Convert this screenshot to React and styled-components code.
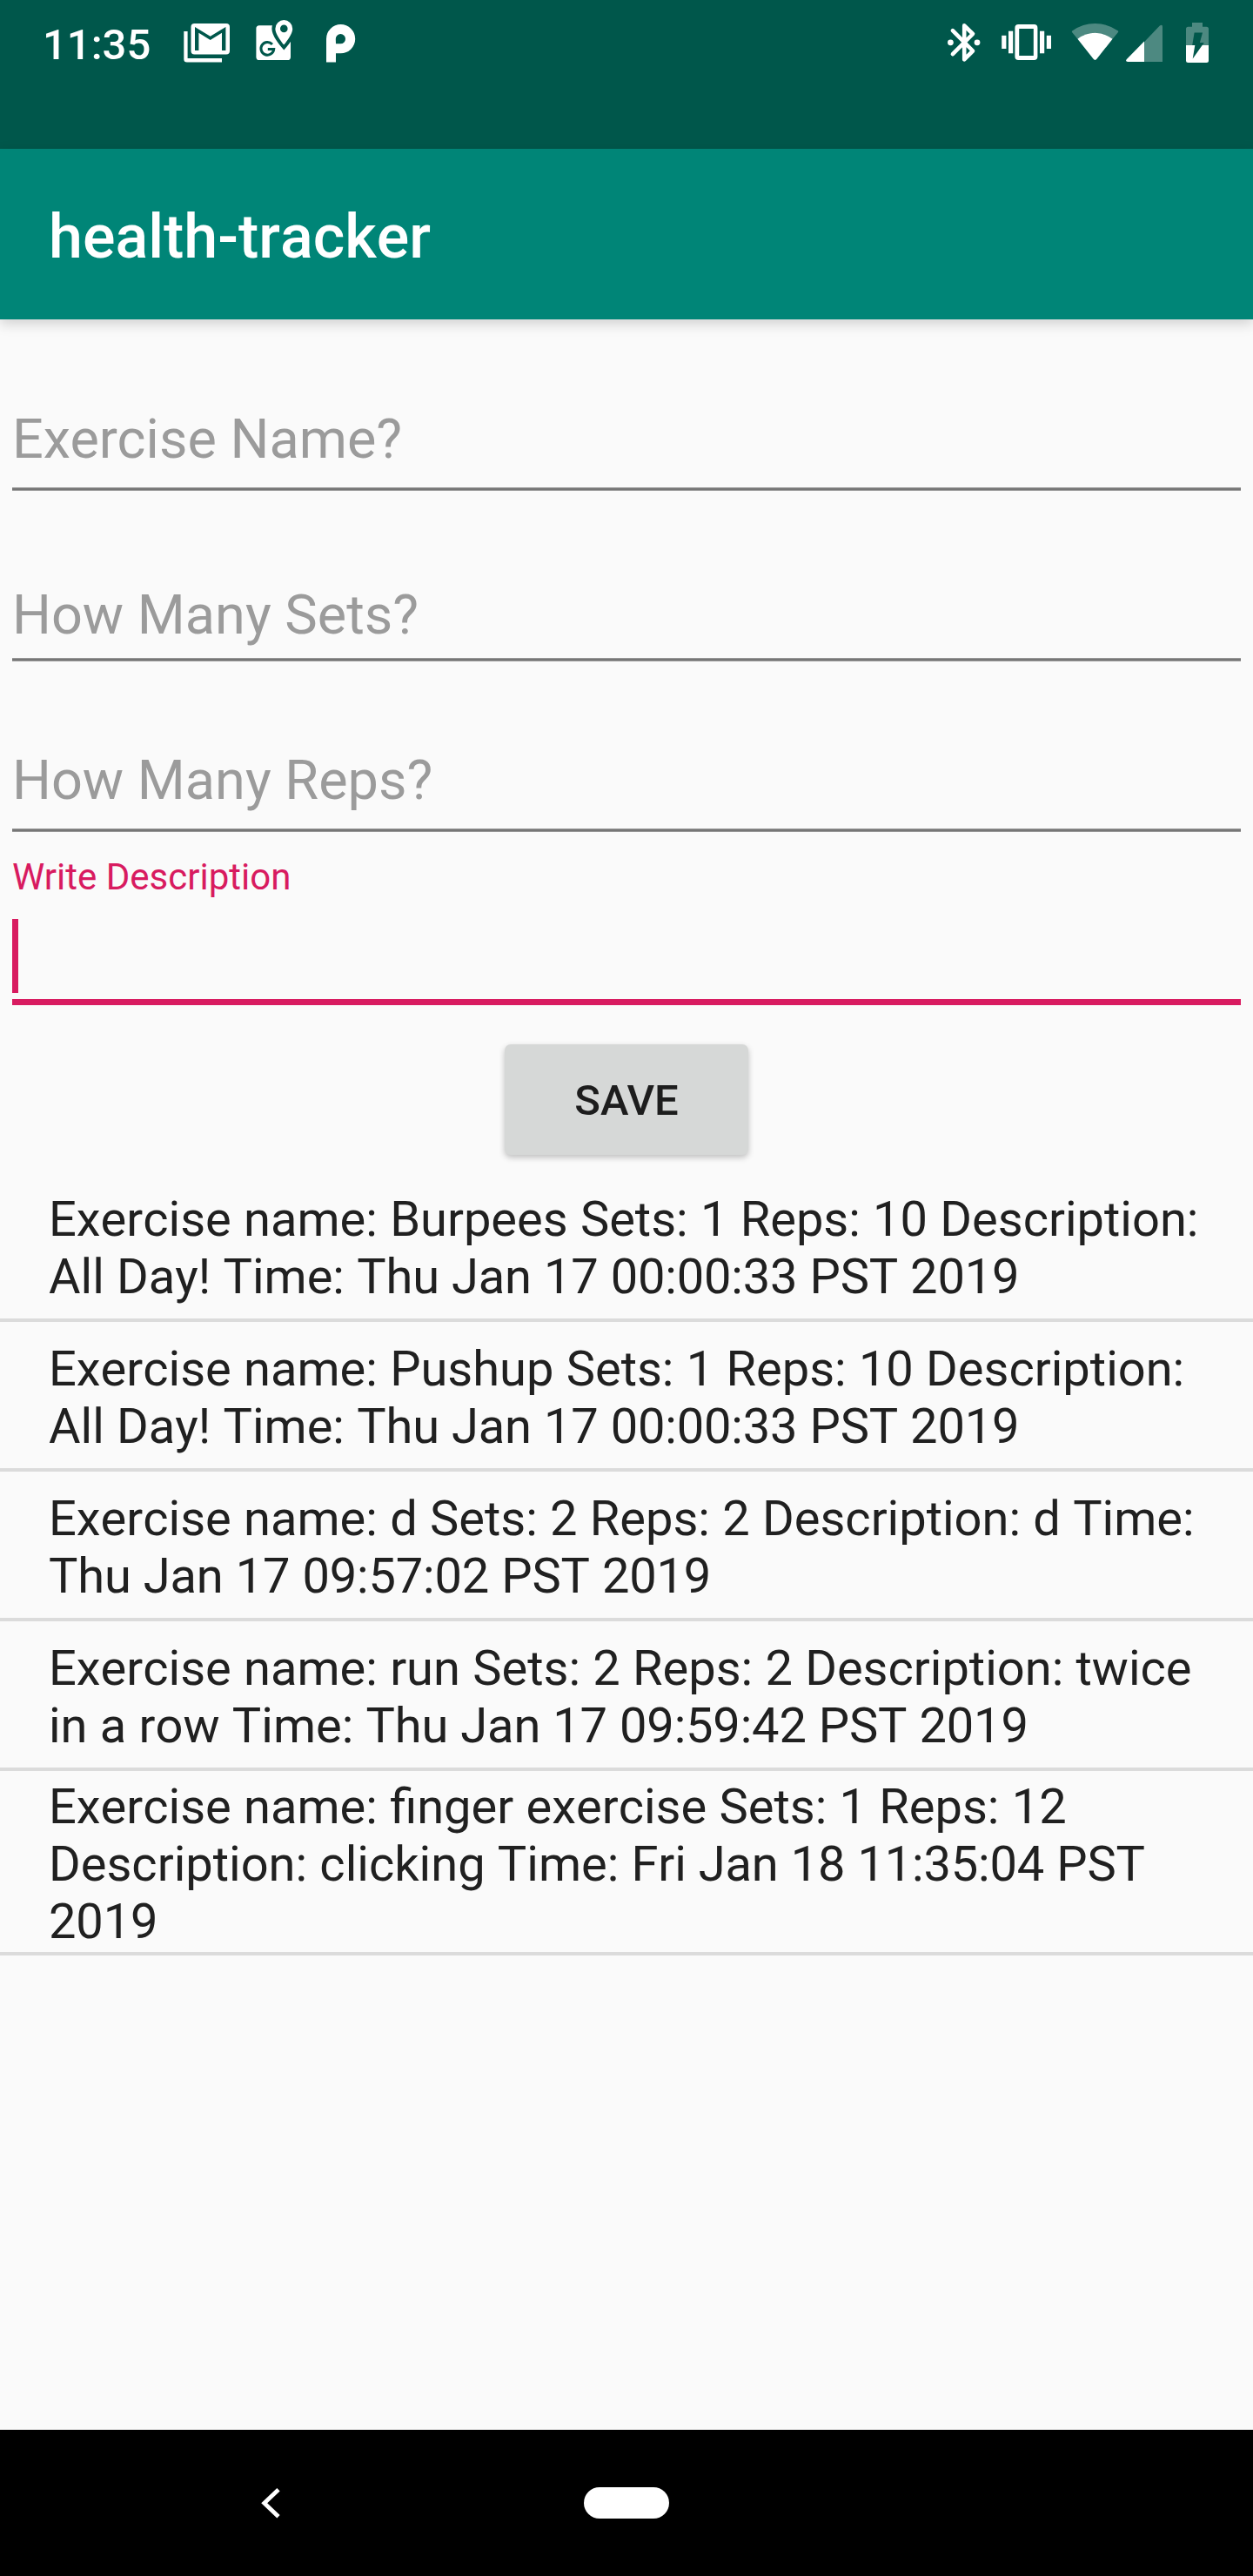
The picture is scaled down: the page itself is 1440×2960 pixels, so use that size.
import React from "react";
import styled, { createGlobalStyle } from "styled-components";

const colors = {
  primary: "#008577",
  primaryDark: "#00574B",
  accent: "#D81B60",
  surface: "#FAFAFA",
  text: "#202020",
  hint: "#9B9B9B",
};

const GlobalStyle = createGlobalStyle`
  *, *::before, *::after { box-sizing: border-box; }
  body {
    margin: 0;
    background: ${colors.surface};
    font-family: Roboto, "Liberation Sans", sans-serif;
  }
`;

const Screen = styled.div`
  display: flex;
  flex-direction: column;
  width: 1440px;
  height: 2960px;
  overflow: hidden;
  background: ${colors.surface};
`;

const StatusBar = styled.header`
  display: flex;
  align-items: flex-start;
  justify-content: space-between;
  flex: none;
  height: 171px;
  padding: 23px 51px 0 49px;
  background: ${colors.primaryDark};
`;

const StatusGroup = styled.div`
  display: flex;
  align-items: flex-start;
`;

const Clock = styled.span`
  width: 162px;
  color: #fff;
  font-size: 49px;
  font-weight: 500;
  line-height: 58px;
  white-space: nowrap;
`;

const StatusIcon = styled.svg`
  display: block;
  flex: none;
  height: 50px;
  margin-left: ${(p) => p.$gap || 0}px;
  fill: #fff;
`;

const AppBar = styled.div`
  position: relative;
  z-index: 1;
  display: flex;
  align-items: center;
  flex: none;
  height: 196px;
  padding: 6px 56px 0;
  background: ${colors.primary};
  box-shadow: 0 5px 14px rgba(0, 0, 0, 0.17);
`;

const Title = styled.h1`
  margin: 0;
  color: #fff;
  font-size: 70px;
  font-weight: 500;
  font-kerning: none;
  line-height: 82px;
`;

const Form = styled.form`
  display: flex;
  flex-direction: column;
  flex: none;
  padding: 0 14px;
`;

const Field = styled.label`
  display: flex;
  flex-direction: column;
  justify-content: flex-end;
  height: ${(p) => p.$height}px;
`;

const Hint = styled.span`
  margin-bottom: ${(p) => p.$gap}px;
  color: ${colors.hint};
  font-size: 63px;
  line-height: 74px;
`;

const Underline = styled.div`
  height: 4px;
  border: solid #979797;
  border-width: 1px 0;
  background: #767676;
`;

const FloatingLabel = styled.span`
  margin-bottom: 24px;
  color: ${colors.accent};
  font-size: 42px;
  line-height: 49px;
`;

const Caret = styled.div`
  width: 7px;
  height: 85px;
  margin-bottom: 7px;
  background: ${colors.accent};
`;

const ActiveUnderline = styled.div`
  height: 7px;
  background: ${colors.accent};
`;

const SaveButton = styled.button`
  align-self: center;
  width: 280px;
  height: 127px;
  margin: 45px 0 20px;
  padding: 2px 0 0;
  border: 0;
  border-radius: 7px;
  background: #d6d8d7;
  box-shadow: 0 3px 7px rgba(0, 0, 0, 0.24);
  color: #1d1d1d;
  font: 500 49px/58px Roboto, "Liberation Sans", sans-serif;
`;

const List = styled.ul`
  flex: 1;
  margin: 0;
  padding: 0;
  list-style: none;
`;

const Row = styled.li`
  display: flex;
  align-items: center;
  min-height: 172px;
  padding: 0 56px;
  border-bottom: 4px solid #dbdbdb;
`;

const RowText = styled.p`
  margin: 0;
  padding: 8px 0 2px;
  color: ${colors.text};
  font-size: 56px;
  font-kerning: none;
  line-height: 66px;
  word-spacing: 0.4px;
`;

const Timestamp = styled.time`
  letter-spacing: -0.16px;
`;

const NavBar = styled.nav`
  display: flex;
  align-items: center;
  flex: none;
  height: 168px;
  padding-left: 300px;
  background: #000;
`;

const BackIcon = styled.svg`
  display: block;
  width: 23px;
  height: 36px;
  margin-right: 348px;
`;

const HomePill = styled.div`
  width: 98px;
  height: 36px;
  border-radius: 18px;
  background: #fff;
`;

const fields = [
  { label: "Exercise Name?", height: 197, gap: 18 },
  { label: "How Many Sets?", height: 196, gap: 12 },
  { label: "How Many Reps?", height: 196, gap: 18 },
];

const exercises = [
  { name: "Burpees", sets: 1, reps: 10, description: "All Day!", time: "Thu Jan 17 00:00:33 PST 2019" },
  { name: "Pushup", sets: 1, reps: 10, description: "All Day!", time: "Thu Jan 17 00:00:33 PST 2019" },
  { name: "d", sets: 2, reps: 2, description: "d", time: "Thu Jan 17 09:57:02 PST 2019" },
  { name: "run", sets: 2, reps: 2, description: "twice in a row", time: "Thu Jan 17 09:59:42 PST 2019" },
  { name: "finger exercise", sets: 1, reps: 12, description: "clicking", time: "Fri Jan 18 11:35:04 PST 2019" },
];

const MailIcon = () => (
  <StatusIcon width="54" viewBox="211 23 54 50">
    <path d="M211.3 36V68q0 3.6 3.6 3.6H255V67H215.6V36Z" />
    <path
      fillRule="evenodd"
      d="M223.5 27H260q4 0 4 4V58.6q0 4-4 4H223.5q-4 0-4-4V31q0-4 4-4ZM224 31V58H228.4V37.7L241.7 46L255 37.7V58H259.4V31L241.7 41.7Z"
    />
  </StatusIcon>
);

const MapsIcon = () => (
  <StatusIcon width="44" $gap={29} viewBox="294 23 44 50">
    <rect x="294.4" y="29.3" width="39.6" height="39.7" rx="3.6" />
    <path
      d="M312.9 50.9A7.4 7.4 0 1 0 314.7 56.6H307.8"
      fill="none"
      stroke={colors.primaryDark}
      strokeWidth="3"
    />
    <path
      d="M326.3 23a9.9 9.9 0 0 0-9.9 9.9c0 7.3 9.9 18.5 9.9 18.5s9.9-11.2 9.9-18.5a9.9 9.9 0 0 0-9.9-9.9Z"
      fill={colors.primaryDark}
      stroke={colors.primaryDark}
      strokeWidth="8"
    />
    <path
      fillRule="evenodd"
      d="M326.3 23a9.9 9.9 0 0 0-9.9 9.9c0 7.3 9.9 18.5 9.9 18.5s9.9-11.2 9.9-18.5a9.9 9.9 0 0 0-9.9-9.9ZM326.3 28.6a4.3 4.3 0 1 1 0 8.6a4.3 4.3 0 1 1 0-8.6Z"
    />
  </StatusIcon>
);

const PandoraIcon = () => (
  <StatusIcon width="34" $gap={37} viewBox="375 23 34 50">
    <path
      fillRule="evenodd"
      d="M375 71.5V44.7a16.6 16.6 0 1 1 16.6 16.6H386V71.5ZM386 50.3H391.4a5.6 5.6 0 1 0-5.6-5.6Z"
    />
  </StatusIcon>
);

const BluetoothIcon = () => (
  <StatusIcon width="38" viewBox="1089 23 38 50">
    <path
      d="M1094.9 35.2L1118 58.5L1108.2 68.3V29.4L1118 39L1094.9 62.2"
      fill="none"
      stroke="#fff"
      strokeWidth="4.6"
      strokeLinecap="round"
      strokeLinejoin="round"
    />
    <circle cx="1092.4" cy="48.8" r="3.4" />
    <circle cx="1123" cy="48.8" r="3.4" />
  </StatusIcon>
);

const VibrateIcon = () => (
  <StatusIcon width="58" $gap={24} viewBox="1151 23 58 50">
    <rect x="1151.2" y="40.8" width="5.2" height="15.2" />
    <rect x="1159" y="35.7" width="5.2" height="25.6" />
    <rect x="1195" y="35.7" width="5.2" height="25.6" />
    <rect x="1202.8" y="40.8" width="5.2" height="15.2" />
    <path
      fillRule="evenodd"
      d="M1170.4 28H1188.4q4 0 4 4V65q0 4-4 4H1170.4q-4 0-4-4V32q0-4 4-4ZM1171.2 33V64H1187.8V33Z"
    />
  </StatusIcon>
);

const WifiIcon = () => (
  <StatusIcon width="55" $gap={22} viewBox="1231 23 55 50">
    <path
      fillOpacity="0.3"
      d="M1238.4 44.7L1232.2 37.2Q1231.3 36 1232.6 35.2Q1244.5 27 1258.5 27T1284.6 35.2Q1285.8 36 1284.8 37.2L1278.6 44.7Q1269.5 37.8 1258.5 37.8T1238.4 44.7Z"
    />
    <path d="M1238.4 44.7Q1247.5 37.8 1258.5 37.8T1278.6 44.7L1260.6 67.6Q1258.5 70.2 1256.4 67.6Z" />
  </StatusIcon>
);

const SignalIcon = () => (
  <StatusIcon width="42" $gap={8} viewBox="1294 23 42 50">
    <path fillOpacity="0.3" d="M1315 48.3L1332.6 29.8Q1336 27 1336 31V71H1315Z" />
    <path d="M1315 47.5V71H1296Q1292.8 70.6 1294.9 68Z" />
  </StatusIcon>
);

const BatteryIcon = () => (
  <StatusIcon width="26" $gap={27} viewBox="1363 23 26 50">
    <path fillOpacity="0.3" d="M1363 52V33.2q0-2.5 2.5-2.5H1370V26H1382V30.7H1386.5q2.5 0 2.5 2.5V52Z" />
    <path d="M1363 52H1389V69.5q0 2.5-2.5 2.5H1365.5q-2.5 0-2.5-2.5Z" />
    <path
      fill={colors.primaryDark}
      d="M1372.6 37.4H1382L1378.9 49H1383.8L1370.7 67.6L1373.3 52H1370.2Z"
    />
  </StatusIcon>
);

export default function App() {
  return (
    <>
      <GlobalStyle />
      <Screen>
        <StatusBar>
          <StatusGroup>
            <Clock>11:35</Clock>
            <MailIcon />
            <MapsIcon />
            <PandoraIcon />
          </StatusGroup>
          <StatusGroup>
            <BluetoothIcon />
            <VibrateIcon />
            <WifiIcon />
            <SignalIcon />
            <BatteryIcon />
          </StatusGroup>
        </StatusBar>
        <AppBar>
          <Title>health-tracker</Title>
        </AppBar>
        <Form>
          {fields.map((f) => (
            <Field key={f.label} $height={f.height}>
              <Hint $gap={f.gap}>{f.label}</Hint>
              <Underline />
            </Field>
          ))}
          <Field $height={199}>
            <FloatingLabel>Write Description</FloatingLabel>
            <Caret />
            <ActiveUnderline />
          </Field>
          <SaveButton type="button">SAVE</SaveButton>
        </Form>
        <List>
          {exercises.map((e) => (
            <Row key={e.name}>
              <RowText>
                {`Exercise name: ${e.name} Sets: ${e.sets} Reps: ${e.reps} Description: ${e.description} Time: `}
                <Timestamp>{e.time}</Timestamp>
              </RowText>
            </Row>
          ))}
        </List>
        <NavBar>
          <BackIcon viewBox="300 2858 23 36">
            <path
              d="M320 2860.8L303.7 2876.3L320 2891.8"
              fill="none"
              stroke="#fff"
              strokeWidth="4.8"
            />
          </BackIcon>
          <HomePill />
        </NavBar>
      </Screen>
    </>
  );
}
